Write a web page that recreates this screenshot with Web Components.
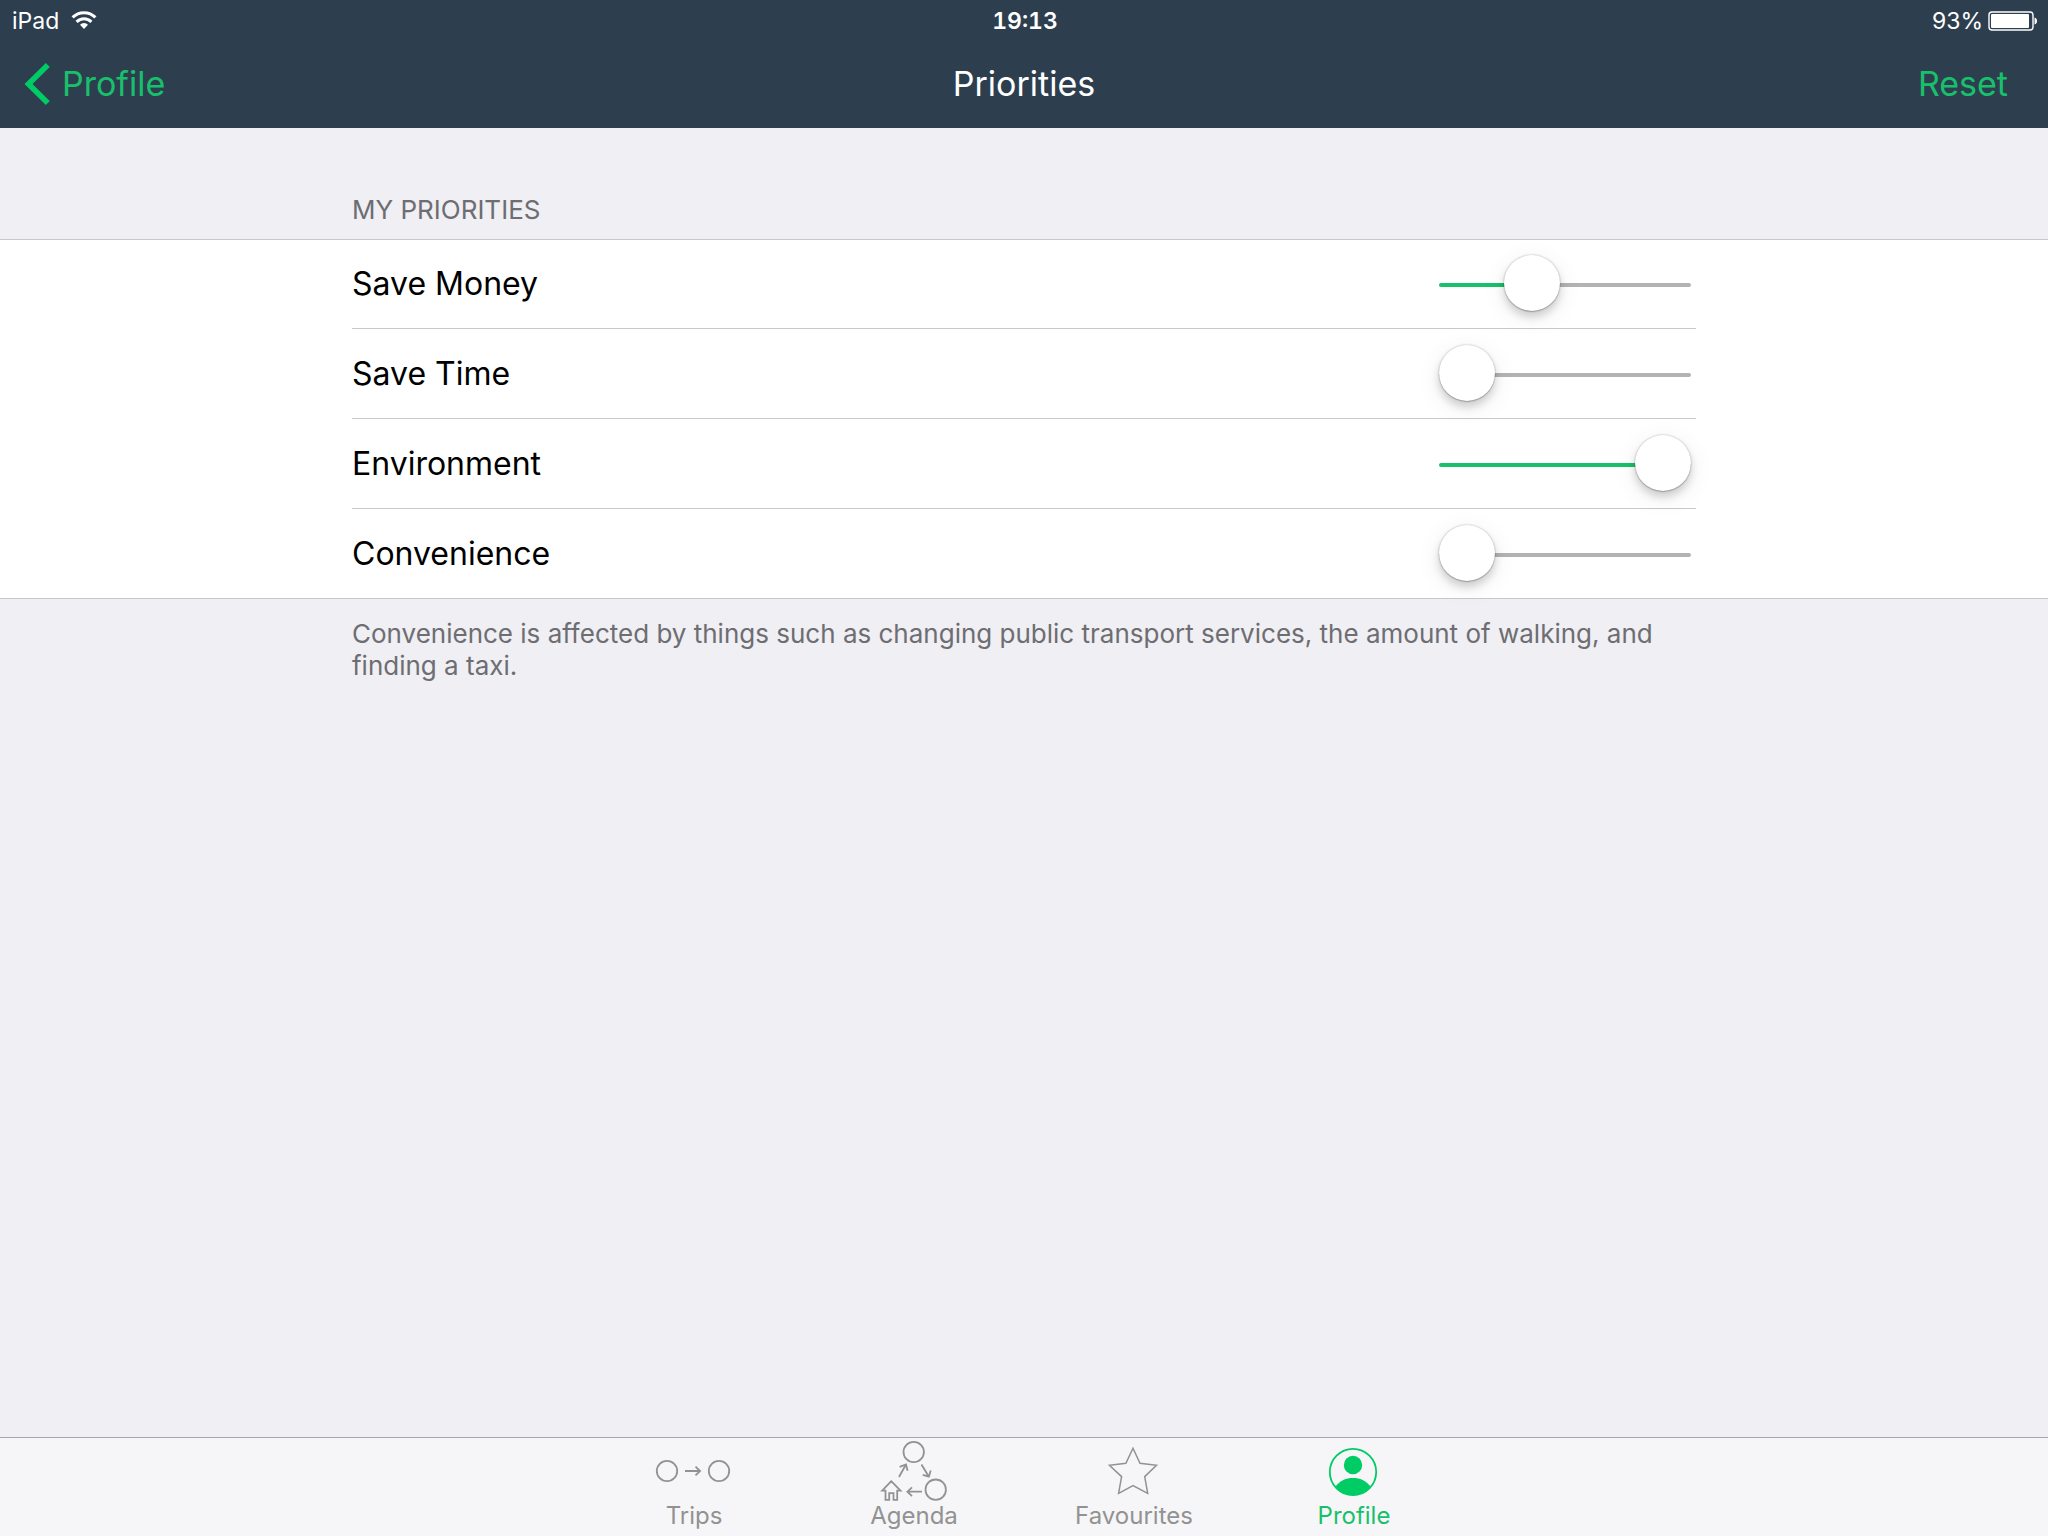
<!DOCTYPE html>
<html lang="en-GB">
<head>
<meta charset="utf-8">
<meta name="viewport" content="width=device-width, initial-scale=1">
<title>Priorities</title>
<style>
html, body { margin: 0; height: 100%; }
body {
  font-family: Inter, "Liberation Sans", sans-serif;
  --bar: #2d3e4f;
  --tint: #00cc66;
  --tint-text: #19c06b;
  --ground: #efeff4;
  --line: #c8c7cc;
  --muted: #6d6d72;
  --tab: #929292;
  --gutter: 352px;
}
</style>
</head>
<body>
<app-screen>
  <status-bar slot="top" carrier="iPad" time="19:13" battery="93"></status-bar>
  <nav-bar slot="top" back="Profile" action="Reset">Priorities</nav-bar>
  <settings-group>
    <span slot="header">MY PRIORITIES</span>
    <slider-row value="33">Save Money</slider-row>
    <slider-row value="0">Save Time</slider-row>
    <slider-row value="100">Environment</slider-row>
    <slider-row value="0" last>Convenience</slider-row>
    <span slot="footer">Convenience is affected by things such as changing public transport services, the amount of walking, and finding a taxi.</span>
  </settings-group>
  <tab-bar slot="bottom">
    <tab-item icon="trips">Trips</tab-item>
    <tab-item icon="agenda">Agenda</tab-item>
    <tab-item icon="star">Favourites</tab-item>
    <tab-item icon="profile" selected>Profile</tab-item>
  </tab-bar>
</app-screen>

<script>
class Base extends HTMLElement {
  constructor() {
    super();
    this.attachShadow({ mode: 'open' });
  }
  connectedCallback() {
    this.shadowRoot.innerHTML = '<style>*{box-sizing:border-box}' + this.css() + '</style>' + this.html();
    this.ready();
  }
  ready() {}
}

customElements.define('app-screen', class extends Base {
  css() { return `
    :host { display: flex; flex-direction: column; min-height: 100vh; background: var(--ground); }
    header { background: var(--bar); color: #fff; }
    main { flex: 1; }`; }
  html() { return `<header><slot name="top"></slot></header><main><slot></slot></main><slot name="bottom"></slot>`; }
});

customElements.define('status-bar', class extends Base {
  css() { return `
    :host { display: grid; grid-template-columns: 1fr auto 1fr; align-items: center; height: 40px; box-sizing: border-box;
      padding: 2px 10px 0 12px; font-size: 23px; line-height: 28px; }
    div { display: flex; align-items: center; gap: 12px; }
    .right { justify-content: flex-end; gap: 5px; }
    strong { font-weight: 600; font-variant-numeric: tabular-nums; }
    svg { display: block; }`; }
  html() { return `
    <div><span>${this.getAttribute('carrier')}</span>
      <svg width="26" height="20" viewBox="0 0 26 20" fill="none" stroke="#fff" stroke-width="3" aria-hidden="true">
        <path d="M1.600 6.400a16 16 0 0 1 22.800 0"/>
        <path d="M5.600 10.900a10.400 10.400 0 0 1 14.800 0"/>
        <path d="M13 18l-4-4.200a5.600 5.600 0 0 1 8 0z" fill="#fff" stroke="none"/>
      </svg></div>
    <strong>${this.getAttribute('time')}</strong>
    <div class="right"><span>${this.getAttribute('battery')}%</span>
      <svg width="50" height="20" viewBox="0 0 50 20" aria-hidden="true">
        <rect x="1" y="1" width="44" height="18" rx="3" fill="none" stroke="#fff" stroke-width="1.400"/>
        <rect x="3" y="3" width="38" height="14" rx="1" fill="#fff"/>
        <path d="M46.500 6.500c1.700.2 2.500 1.700 2.500 3.500s-.8 3.300-2.500 3.500z" fill="#fff"/>
      </svg></div>`; }
});

customElements.define('nav-bar', class extends Base {
  css() { return `
    :host { display: grid; grid-template-columns: 1fr auto 1fr; align-items: center; height: 88px; box-sizing: border-box;
      padding: 0 24px; font-size: 34px; line-height: 44px; }
    h1 { margin: 0; font: inherit; }
    a, button { color: var(--tint-text); font: inherit; text-decoration: none; background: none; border: 0; padding: 0; }
    a { display: flex; align-items: center; gap: 11px; justify-self: start; }
    button { justify-self: end; padding-right: 16px; }
    svg { display: block; }`; }
  html() { return `
    <a href="#profile"><svg width="27" height="44" viewBox="0 0 27 44" fill="none" stroke="#00cc66" stroke-width="5.600" aria-hidden="true"><path d="M23.800 3L4.500 22l19.300 19"/></svg>${this.getAttribute('back')}</a>
    <h1><slot></slot></h1>
    <button type="button">${this.getAttribute('action')}</button>`; }
});

customElements.define('settings-group', class extends Base {
  css() { return `
    :host { display: block; }
    .text { padding: 0 var(--gutter); font-size: 26px; line-height: 32px; color: var(--muted); }
    h2, p { margin: 0; font-weight: 400; }
    h2.text { padding-top: 66px; padding-bottom: 13px; }
    p.text { padding-top: 19px; }
    .rows { background: #fff; box-shadow: inset 0 1px var(--line), inset 0 -1px var(--line); padding: 0 var(--gutter); }`; }
  html() { return `
    <h2 class="text"><slot name="header"></slot></h2>
    <div class="rows"><slot></slot></div>
    <p class="text"><slot name="footer"></slot></p>`; }
});

customElements.define('slider-row', class extends Base {
  css() { return `
    :host { display: flex; align-items: center; justify-content: space-between; height: 90px;
      padding-right: 5px; border-bottom: 1px solid var(--line); box-sizing: border-box; }
    :host([last]) { border-bottom-color: transparent; }
    label { font-size: 32px; line-height: 40px; color: #000; }
    input { -webkit-appearance: none; appearance: none; display: block; width: 252px; height: 60px; margin: 2px 0 0; background: none; }
    input::-webkit-slider-runnable-track { height: 4px; border-radius: 2px;
      background: linear-gradient(to right, var(--tint-text) var(--fill), #b3b3b3 var(--fill)); }
    input::-webkit-slider-thumb { -webkit-appearance: none; width: 56px; height: 56px; margin-top: -28px; border-radius: 50%;
      background: #fff; box-shadow: 0 0 2px rgba(0,0,0,.3), 0 1px 1px rgba(0,0,0,.18), 0 6px 8px rgba(0,0,0,.16), 0 6px 26px rgba(0,0,0,.08); }`; }
  html() { return `
    <label for="level"><slot></slot></label>
    <input id="level" type="range" min="0" max="100" value="${this.getAttribute('value')}">`; }
  ready() {
    const input = this.shadowRoot.querySelector('input');
    const paint = () => input.style.setProperty('--fill', input.value + '%');
    input.addEventListener('input', paint);
    paint();
  }
});

customElements.define('tab-bar', class extends Base {
  css() { return `
    :host { display: block; border-top: 1px solid #a7a7ab; background: #f6f6f8; }
    nav { display: flex; justify-content: center; height: 98px; }`; }
  html() { return `<nav aria-label="Sections"><slot></slot></nav>`; }
});

const icons = {
  trips: `<g stroke-width="1.800"><circle cx="13" cy="33" r="10.200"/><circle cx="65" cy="33" r="10.200"/>
    <path d="M31 33h15M41.500 28.600l4.600 4.400-4.600 4.400"/></g>`,
  agenda: `<g stroke-width="1.800"><circle cx="39.700" cy="14" r="10.200"/><circle cx="61.700" cy="51.700" r="10.200"/>
    <path d="M48 53.700H33.500M38 49.300l-4.600 4.400 4.600 4.400"/>
    <path d="M25 39l6.800-12.200M25.600 28.800l6.400-2.300 1.600 6.300"/>
    <path d="M47.500 26.500l7.200 12M48.700 36.800l6.200 1.800 1.800-6.100"/>
    <path d="M17.300 43.200L8.200 52.600h3.300v9.200h3.700v-6.600h4.300v6.600h3.700v-9.200h3.300z"/></g>`,
  star: `<path stroke-width="1.500" d="M39 10.300l7 15 16.500 2L50.700 38.600l3 16.700L39 47.700l-14.400 7.600 3-16.700-12.200-11.300 16.500-2z"/>`,
  profile: `<circle cx="39" cy="34" r="23.200" stroke-width="1.800"/>
    <g fill="currentColor" stroke="none"><circle cx="39" cy="27" r="9.200"/>
    <path d="M21.500 48.500C26 42.500 32 40 39 40s13 2.500 17.500 8.500A23 23 0 0 1 39 57.500a23 23 0 0 1-17.500-9z"/></g>`
};

customElements.define('tab-item', class extends Base {
  css() { return `
    :host { display: block; width: 220px; color: var(--tab); }
    :host([selected]) { color: var(--tint-text); }
    :host([selected]) svg { color: var(--tint); }
    a { display: flex; flex-direction: column; align-items: center; color: inherit; text-decoration: none;
      font-size: 24px; line-height: 28px; }
    svg { display: block; }`; }
  html() { return `
    <a href="#${this.getAttribute('icon')}"${this.hasAttribute('selected') ? ' aria-current="page"' : ''}>
      <svg width="80" height="64" viewBox="0 0 80 64" fill="none" stroke="currentColor" aria-hidden="true">${icons[this.getAttribute('icon')]}</svg>
      <span><slot></slot></span></a>`; }
});
</script>
</body>
</html>
